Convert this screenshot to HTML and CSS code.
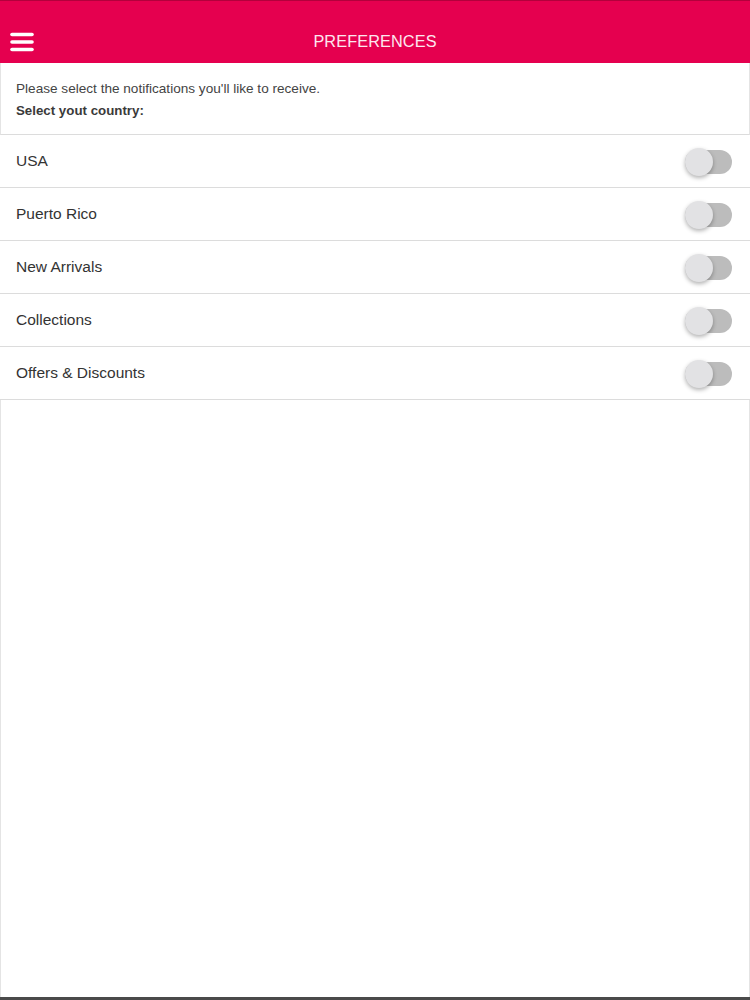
FILE: index.html
```html
<!DOCTYPE html>
<html lang="en">
<head>
    <meta charset="UTF-8">
    <title>Preferences</title>
    <link rel="stylesheet" href="styles.css">
</head>
<body>
    <div class="app">
        <!-- Top bar with menu and title -->
        <header class="topbar">
            <button class="menu-btn" aria-label="Menu">
                <svg width="24" height="20" viewBox="0 0 24 20">
                    <line x1="2" y1="2.5" x2="22" y2="2.5" stroke="#fff" stroke-width="3.6" stroke-linecap="round"/>
                    <line x1="2" y1="10" x2="22" y2="10" stroke="#fff" stroke-width="3.6" stroke-linecap="round"/>
                    <line x1="2" y1="17.5" x2="22" y2="17.5" stroke="#fff" stroke-width="3.6" stroke-linecap="round"/>
                </svg>
            </button>
            <h1 class="title">PREFERENCES</h1>
        </header>

        <div class="intro">
            <p>Please select the notifications you'll like to receive.</p>
            <p class="strong">Select yout country:</p>
        </div>

        <!-- Toggle list -->
        <ul class="options">
            <li><span>USA</span><label class="switch"><input type="checkbox"><span class="knob"></span></label></li>
            <li><span>Puerto Rico</span><label class="switch"><input type="checkbox"><span class="knob"></span></label></li>
            <li><span>New Arrivals</span><label class="switch"><input type="checkbox"><span class="knob"></span></label></li>
            <li><span>Collections</span><label class="switch"><input type="checkbox"><span class="knob"></span></label></li>
            <li><span>Offers &amp; Discounts</span><label class="switch"><input type="checkbox"><span class="knob"></span></label></li>
        </ul>

        <div class="blank"></div>
    </div>
</body>
</html>
```

FILE: styles.css
```css
/* Basic layout */
html, body {
    margin: 0;
    padding: 0;
}
body {
    font-family: "Liberation Sans", Arial, sans-serif;
    color: #333;
    background: #fff;
}
.app {
    display: flex;
    flex-direction: column;
    height: 1000px;
    border-bottom: 3px solid #4a4a4a;
    box-sizing: border-box;
}
.topbar {
    position: relative;
    height: 63px;
    flex-shrink: 0;
    background: #e5004f;
    border-top: 1px solid #b3003c;
    box-sizing: border-box;
    display: flex;
    align-items: center;
    justify-content: center;
}
.menu-btn {
    position: absolute;
    left: 10px;
    top: 31px;
    padding: 0;
    border: none;
    background: none;
    line-height: 0;
    cursor: pointer;
}
.title {
    margin: 0;
    padding-top: 19px;
    font-size: 16.3px;
    font-weight: normal;
    color: #fde6ee;
    letter-spacing: 0.1px;
}
.intro {
    height: 72px;
    padding: 18px 15px 0;
    box-sizing: border-box;
    border-left: 1px solid #e4e4e4;
    border-right: 1px solid #e4e4e4;
    border-bottom: 1px solid #dcdcdc;
    font-size: 13.6px;
    color: #444;
}
.intro p {
    margin: 0 0 7px;
}
.intro .strong {
    font-weight: bold;
    font-size: 13.3px;
    color: #3a3a3a;
}
.options {
    list-style: none;
    margin: 0;
    padding: 0;
}
.options li {
    height: 53px;
    box-sizing: border-box;
    padding: 0 18px 0 16px;
    display: flex;
    align-items: center;
    justify-content: space-between;
    border-bottom: 1px solid #dcdcdc;
    font-size: 15.5px;
    color: #333;
}
.switch {
    position: relative;
    width: 47px;
    height: 24px;
    margin-top: 1px;
}
.switch input {
    display: none;
}
.switch .knob {
    position: absolute;
    inset: 0;
    border-radius: 12px;
    background: #bcbcbc;
}
.switch .knob::before {
    content: "";
    position: absolute;
    left: 0;
    top: -2px;
    width: 28px;
    height: 28px;
    border-radius: 50%;
    background: #e2e2e4;
    box-shadow: 0 2px 4px rgba(0, 0, 0, 0.3);
}
.blank {
    flex: 1;
    border-left: 1px solid #e4e4e4;
    border-right: 1px solid #e4e4e4;
}
```
